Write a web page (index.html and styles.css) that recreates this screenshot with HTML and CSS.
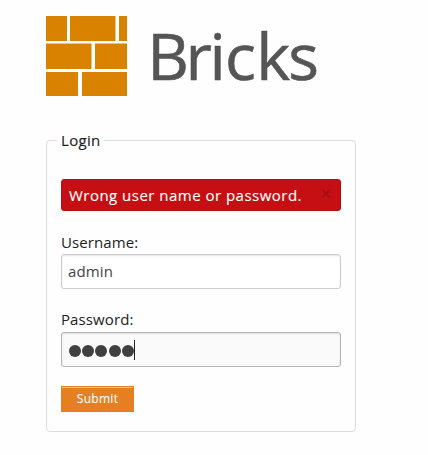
FILE: index.html
```
<!DOCTYPE html>
<html lang="en">
<head>
    <meta charset="UTF-8">
    <meta name="viewport" content="width=device-width, initial-scale=1.0">
    <title>Bricks Login</title>
    <link rel="stylesheet" href="styles.css">
</head>
<body>
    <div class="container">
        <header>
            <svg class="logo" width="280" height="81" viewBox="0 0 280 81">
                <g class="bricks">
                    <rect x="0" y="0" width="21" height="25"/>
                    <rect x="24" y="0" width="45.5" height="25"/>
                    <rect x="73" y="0" width="8" height="25"/>
                    <rect x="0" y="27.5" width="45.5" height="25.5"/>
                    <rect x="49" y="27.5" width="32" height="25.5"/>
                    <rect x="0" y="56" width="32" height="24"/>
                    <rect x="36" y="56" width="45" height="24"/>
                </g>
                <text class="logo-text" x="101.3 139.6 163.5 179.1 210.2 242.3" y="63.5">Bricks</text>
            </svg>
        </header>

        <form>
            <fieldset>
                <legend>Login</legend>
                <div class="alert-box">
                    <span class="message">Wrong user name or password.</span>
                    <span class="close">×</span>
                </div>
                <label for="username">Username:</label>
                <input class="field" type="text" id="username" value="admin">
                <label class="password-label">Password:</label>
                <div class="field focused">
                    <span class="dot"></span>
                    <span class="dot"></span>
                    <span class="dot"></span>
                    <span class="dot"></span>
                    <span class="dot"></span>
                    <span class="caret"></span>
                </div>
                <button type="button">Submit</button>
            </fieldset>
        </form>
    </div>
</body>
</html>
```
FILE: styles.css
```
* { box-sizing: border-box; }

body {
    font-family: "Open Sans", sans-serif;
    margin: 0;
    background-color: #fefefe;
    color: #222;
    font-size: 15px;
}

.container {
    width: 310px;
    margin-left: 46px;
    padding-top: 16px;
}

.logo { display: block; overflow: visible; }

.bricks { fill: #d98200; }

.logo-text {
    font-family: "Open Sans", sans-serif;
    font-size: 64.5px;
    fill: #555;
    stroke: #555;
    stroke-width: 0.6px;
}

fieldset {
    height: 302px;
    margin: 33px 0 0;
    padding: 29px 14px 0;
    border: 1px solid #ddd;
    border-radius: 4px;
}

legend {
    margin-left: -4px;
    padding: 0 4px;
    letter-spacing: 0.3px;
    line-height: 20px;
    -webkit-text-stroke: 0.15px #222;
}

.alert-box {
    display: flex;
    justify-content: space-between;
    height: 32px;
    margin-bottom: 21px;
    padding: 0 9px 0 7px;
    border: 1px solid #b30f13;
    border-radius: 3px;
    background-color: #c60f13;
    color: #fff;
    line-height: 31px;
}

.message {
    letter-spacing: 0.48px;
    white-space: nowrap;
    -webkit-text-stroke: 0.12px #fff;
}

.close {
    color: #a01014;
    font-size: 18px;
    line-height: 27px;
    -webkit-text-stroke: 0.5px #a01014;
}

label {
    display: block;
    height: 22px;
    line-height: 20px;
    letter-spacing: 0.1px;
}

.password-label { margin-top: -1px; height: 23px; }

.field {
    display: flex;
    align-items: center;
    width: 100%;
    height: 35px;
    margin-bottom: 21px;
    padding: 0 6px 2px;
    border: 1px solid #ccc;
    border-radius: 3px;
    background-color: #fff;
    box-shadow: inset 0 1px 2px rgba(0, 0, 0, 0.1);
    color: #444;
    font-family: inherit;
    font-size: 15px;
    letter-spacing: 0.15px;
}

.focused {
    gap: 1.4px;
    margin-bottom: 19px;
    padding: 0 6.5px;
    border-color: #b3b3b3;
    background-color: #fafafa;
}

.dot {
    width: 12px;
    height: 12px;
    margin-top: 3px;
    border-radius: 50%;
    background-color: #404040;
}

.caret {
    width: 1px;
    height: 20px;
    margin-left: -1px;
    background-color: #222;
}

button {
    display: block;
    width: 73px;
    height: 26px;
    padding: 0;
    border: 1px solid #e67e22;
    background-color: #e67e22;
    box-shadow: inset 0 1px 0 rgba(255, 255, 255, 0.5);
    color: #fff;
    font-family: inherit;
    font-size: 12px;
    letter-spacing: 0.3px;
    line-height: 22px;
    -webkit-text-stroke: 0.1px #fff;
}
```
